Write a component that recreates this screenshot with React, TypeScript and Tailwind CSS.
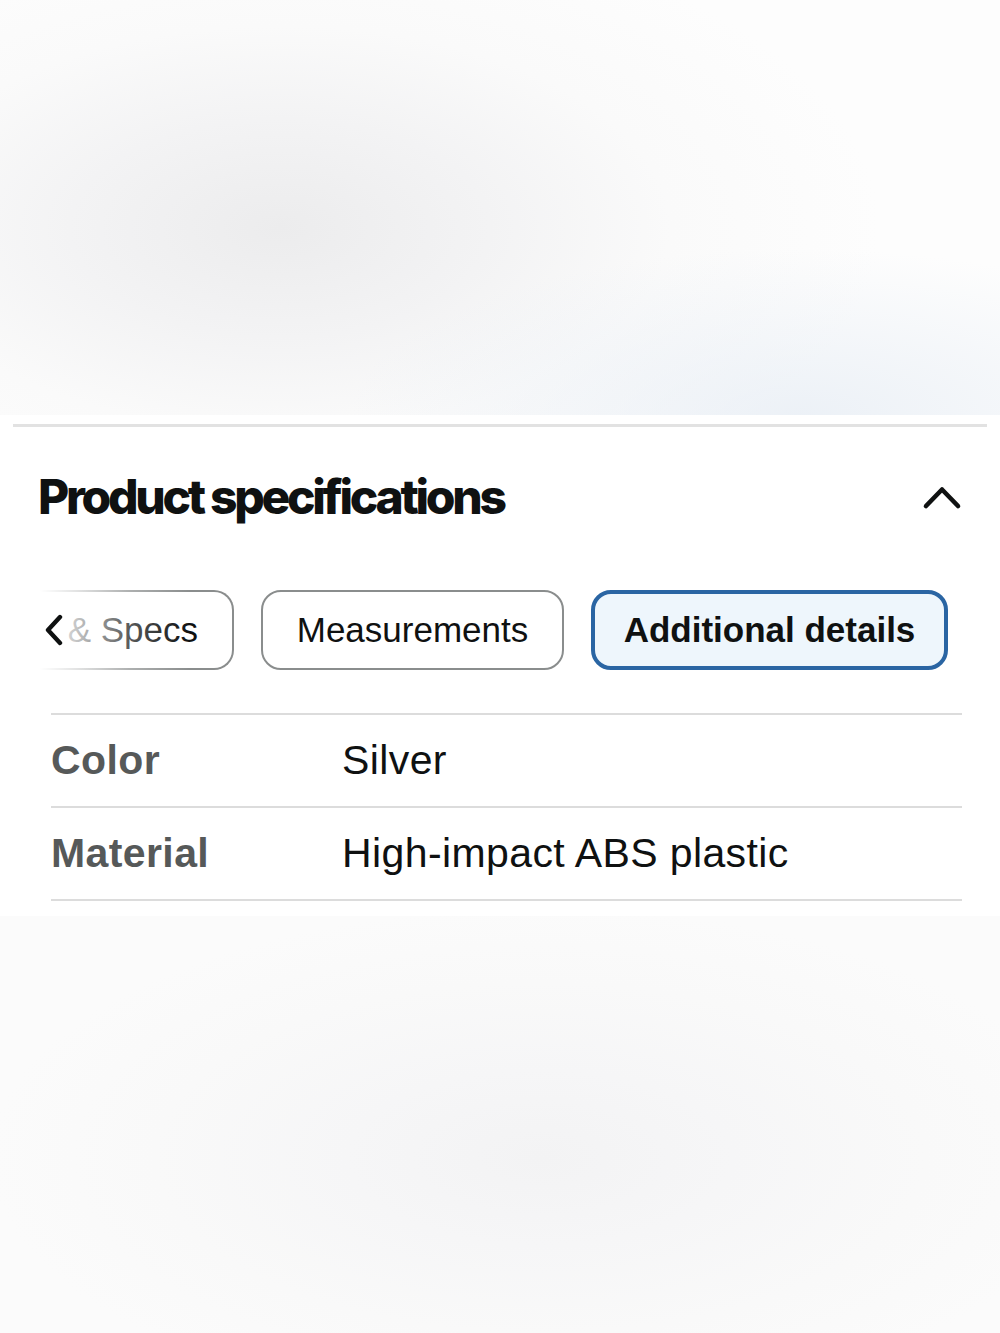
import React from "react";

export default function App() {
  return (
    <div className="w-[1000px] h-[1333px] flex flex-col bg-white" style={{ fontFamily: '"Liberation Sans", Arial, sans-serif' }}>
      <div className="h-[415px] w-full bg-[radial-gradient(ellipse_60%_75%_at_28%_55%,#ececed_0%,#f3f3f4_35%,#fafafa_65%,#fdfdfd_100%)] relative">
        <div className="absolute inset-0 bg-[radial-gradient(ellipse_45%_40%_at_80%_100%,rgba(232,238,245,0.8)_0%,rgba(255,255,255,0)_100%)]" />
      </div>

      <div className="h-[501px] w-full bg-white flex flex-col">
        <div className="mx-[13px] mt-[9px] h-[3px] bg-[#e2e2e2]" />

        <div className="h-[140px] flex items-center justify-between pl-[38px] pr-[38px]">
          <h2
            className="text-[48px] font-extrabold leading-none tracking-[-3.3px] text-[#0f1111]"
            style={{ fontFamily: 'Inter, "Liberation Sans", sans-serif' }}
          >
            Product specifications
          </h2>
          <svg width="40" height="26" viewBox="0 0 40 26">
            <path d="M4 22 L20 5.5 L36 22" fill="none" stroke="#0f1111" strokeWidth="4.6" strokeLinecap="round" strokeLinejoin="round" />
          </svg>
        </div>

        <div className="mt-[23px] flex h-[80px] gap-[27px] pl-[40px]">
          <div className="relative w-[194px] h-[80px] rounded-r-[20px] border-2 border-l-0 border-[#8a8d8d] flex items-center justify-end pr-[34px] text-[35px] text-[#0f1111]">
            <span>&amp; Specs</span>
            <div className="absolute -top-[2px] -bottom-[2px] left-0 w-[150px] bg-[linear-gradient(to_right,rgba(255,255,255,1)_0%,rgba(255,255,255,0.75)_25%,rgba(255,255,255,0.3)_60%,rgba(255,255,255,0)_100%)]" />
            <svg width="22" height="32" viewBox="0 0 22 32" className="absolute left-[3px] top-[22px]">
              <path d="M17 3 L5 16 L17 29" fill="none" stroke="#0f1111" strokeWidth="4.4" strokeLinecap="round" strokeLinejoin="round" />
            </svg>
          </div>
          <div className="w-[303px] h-[80px] rounded-[20px] border-2 border-[#8a8d8d] flex items-center justify-center text-[35px] text-[#0f1111]">
            Measurements
          </div>
          <div className="w-[357px] h-[80px] rounded-[20px] border-[4px] border-[#2a65a3] bg-[#eef6fc] flex items-center justify-center text-[35px] font-bold text-[#0f1111]">
            Additional details
          </div>
        </div>

        <div className="mt-[43px] ml-[51px] w-[911px] flex flex-col">
          <div className="h-[2px] bg-[#dcdcdc]" />
          <div className="h-[91px] flex items-center text-[41px] tracking-[0.4px]">
            <div className="w-[291px] font-bold text-[#565959]">Color</div>
            <div className="text-[#0f1111]">Silver</div>
          </div>
          <div className="h-[2px] bg-[#dcdcdc]" />
          <div className="h-[91px] flex items-center text-[41px] tracking-[0.4px]">
            <div className="w-[291px] font-bold text-[#565959]">Material</div>
            <div className="text-[#0f1111]">High-impact ABS plastic</div>
          </div>
          <div className="h-[2px] bg-[#dcdcdc]" />
        </div>
      </div>

      <div className="flex-1 w-full bg-[radial-gradient(ellipse_55%_60%_at_54%_58%,#f3f3f4_0%,#f6f6f7_35%,#f9f9f9_70%,#fbfbfb_100%)]" />
    </div>
  );
}
